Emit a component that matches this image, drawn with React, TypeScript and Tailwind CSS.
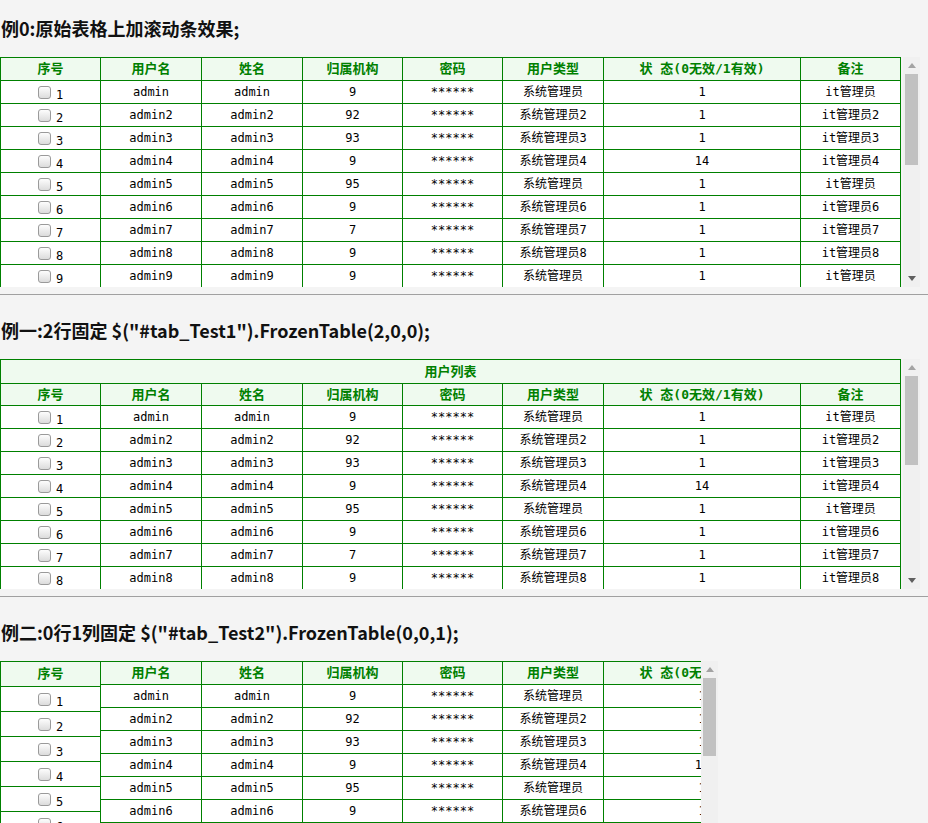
import React from 'react';

type Row = [string, string, string, string, string, string];

const rows: Row[] = [
  ['admin', 'admin', '9', '系统管理员', '1', 'it管理员'],
  ['admin2', 'admin2', '92', '系统管理员2', '1', 'it管理员2'],
  ['admin3', 'admin3', '93', '系统管理员3', '1', 'it管理员3'],
  ['admin4', 'admin4', '9', '系统管理员4', '14', 'it管理员4'],
  ['admin5', 'admin5', '95', '系统管理员', '1', 'it管理员'],
  ['admin6', 'admin6', '9', '系统管理员6', '1', 'it管理员6'],
  ['admin7', 'admin7', '7', '系统管理员7', '1', 'it管理员7'],
  ['admin8', 'admin8', '9', '系统管理员8', '1', 'it管理员8'],
  ['admin9', 'admin9', '9', '系统管理员', '1', 'it管理员'],
];

const headers = ['用户名', '姓名', '归属机构', '密码', '用户类型', '状 态(0无效/1有效)', '备注'];

// widths include the right border of each cell
const colW = ['w-[101px]', 'w-[101px]', 'w-[100px]', 'w-[100px]', 'w-[101px]', 'w-[197px]', 'w-[100px]'];

const cellFont = "font-['DejaVu_Sans_Mono','Noto_Sans_CJK_SC',monospace] text-[12px] text-black";
const headFont = "font-['DejaVu_Sans_Mono','Noto_Sans_CJK_SC',monospace] text-[13px] font-bold text-[#008000]";

const Checkbox: React.FC = () => (
  <span className="inline-block w-[13px] h-[13px] rounded-[3px] border border-[#9a9a9a] bg-gradient-to-b from-[#fdfdfd] to-[#dcdcdc]" />
);

const NoCell: React.FC<{ n: number; h: string; w: string }> = ({ n, h, w }) => (
  <div className={`${w} ${h} shrink-0 flex items-center justify-center gap-[5px] border-r border-b border-[#008000] bg-white`}>
    <Checkbox />
    <span className={`${cellFont} pt-[5px]`}>{n}</span>
  </div>
);

const HeadRow: React.FC<{ h: string }> = ({ h }) => (
  <div className="flex">
    {headers.map((t, i) => (
      <div
        key={i}
        className={`${colW[i]} ${h} shrink-0 flex items-center justify-center whitespace-pre border-r border-b border-[#008000] bg-[#effaef] ${headFont}`}
      >
        {t}
      </div>
    ))}
  </div>
);

const DataRow: React.FC<{ r: Row; h: string }> = ({ r, h }) => {
  const cells = [r[0], r[1], r[2], '******', r[3], r[4], r[5]];
  return (
    <div className="flex">
      {cells.map((c, i) => (
        <div
          key={i}
          className={`${colW[i]} ${h} shrink-0 flex items-center justify-center whitespace-nowrap border-r border-b border-[#008000] bg-white ${cellFont}`}
        >
          {c}
        </div>
      ))}
    </div>
  );
};

const Arrow: React.FC<{ down?: boolean }> = ({ down }) => (
  <div className="h-[17px] flex items-center justify-center">
    <svg width="8" height="5" viewBox="0 0 8 5">
      {down ? <path d="M0 0 H8 L4 5 Z" fill="#5f5f5f" /> : <path d="M0 5 H8 L4 0 Z" fill="#a3a3a3" />}
    </svg>
  </div>
);

const ScrollBar: React.FC<{ thumb: string }> = ({ thumb }) => (
  <div className="w-[17px] shrink-0 bg-[#f0f0f0] flex flex-col">
    <Arrow />
    <div className={`mx-[2px] bg-[#c1c1c1] ${thumb}`} />
    <div className="flex-1" />
    <Arrow down />
  </div>
);

const Heading: React.FC<{ children: React.ReactNode }> = ({ children }) => (
  <div className="h-[57px] flex items-center pl-[1px] font-['Noto_Sans_CJK_SC',sans-serif] font-bold text-[18px] text-[#111]">
    {children}
  </div>
);

const Separator: React.FC = () => <div className="my-[7px] h-px bg-[#a0a0a0]" />;

export default function App() {
  return (
    <div className="min-h-screen w-full bg-[#f4f4f4]">
      {/* 例0 */}
      <Heading>例0:原始表格上加滚动条效果;</Heading>
      <div className="flex h-[230px]">
        <div className="w-[903px] overflow-hidden">
          <div className="w-[901px] border-l border-t border-[#008000]">
            <div className="flex">
              <div className={`w-[100px] h-[23px] shrink-0 flex items-center justify-center border-r border-b border-[#008000] bg-[#effaef] ${headFont}`}>序号</div>
              <HeadRow h="h-[23px]" />
            </div>
            {rows.map((r, i) => (
              <div key={i} className="flex">
                <NoCell n={i + 1} h="h-[23px]" w="w-[100px]" />
                <DataRow r={r} h="h-[23px]" />
              </div>
            ))}
          </div>
        </div>
        <ScrollBar thumb="h-[91px]" />
      </div>

      <Separator />

      {/* 例一 */}
      <Heading>例一:2行固定 $("#tab_Test1").FrozenTable(2,0,0);</Heading>
      <div className="flex h-[230px]">
        <div className="w-[903px] overflow-hidden">
          <div className="w-[901px] border-l border-t border-[#008000]">
            <div className={`h-[24px] flex items-center justify-center border-r border-b border-[#008000] bg-[#effaef] ${headFont}`}>用户列表</div>
            <div className="flex">
              <div className={`w-[100px] h-[22px] shrink-0 flex items-center justify-center border-r border-b border-[#008000] bg-[#effaef] ${headFont}`}>序号</div>
              <HeadRow h="h-[22px]" />
            </div>
            {rows.slice(0, 8).map((r, i) => (
              <div key={i} className="flex">
                <NoCell n={i + 1} h="h-[23px]" w="w-[100px]" />
                <DataRow r={r} h="h-[23px]" />
              </div>
            ))}
          </div>
        </div>
        <ScrollBar thumb="h-[89px]" />
      </div>

      <Separator />

      {/* 例二 */}
      <Heading>例二:0行1列固定 $("#tab_Test2").FrozenTable(0,0,1);</Heading>
      <div className="flex h-[230px]">
        <div className="w-[101px] shrink-0 overflow-hidden">
          <div className="border-l border-t border-[#008000]">
            <div className={`h-[25px] flex items-center justify-center border-r border-b border-[#008000] bg-[#effaef] ${headFont}`}>序号</div>
            {rows.map((_, i) => (
              <NoCell key={i} n={i + 1} h="h-[25px]" w="w-full" />
            ))}
          </div>
        </div>
        <div className="w-[600px] shrink-0 overflow-hidden">
          <div className="w-[800px] border-t border-[#008000]">
            <HeadRow h="h-[23px]" />
            {rows.map((r, i) => (
              <DataRow key={i} r={r} h="h-[23px]" />
            ))}
          </div>
        </div>
        <ScrollBar thumb="h-[78px]" />
      </div>
    </div>
  );
}
